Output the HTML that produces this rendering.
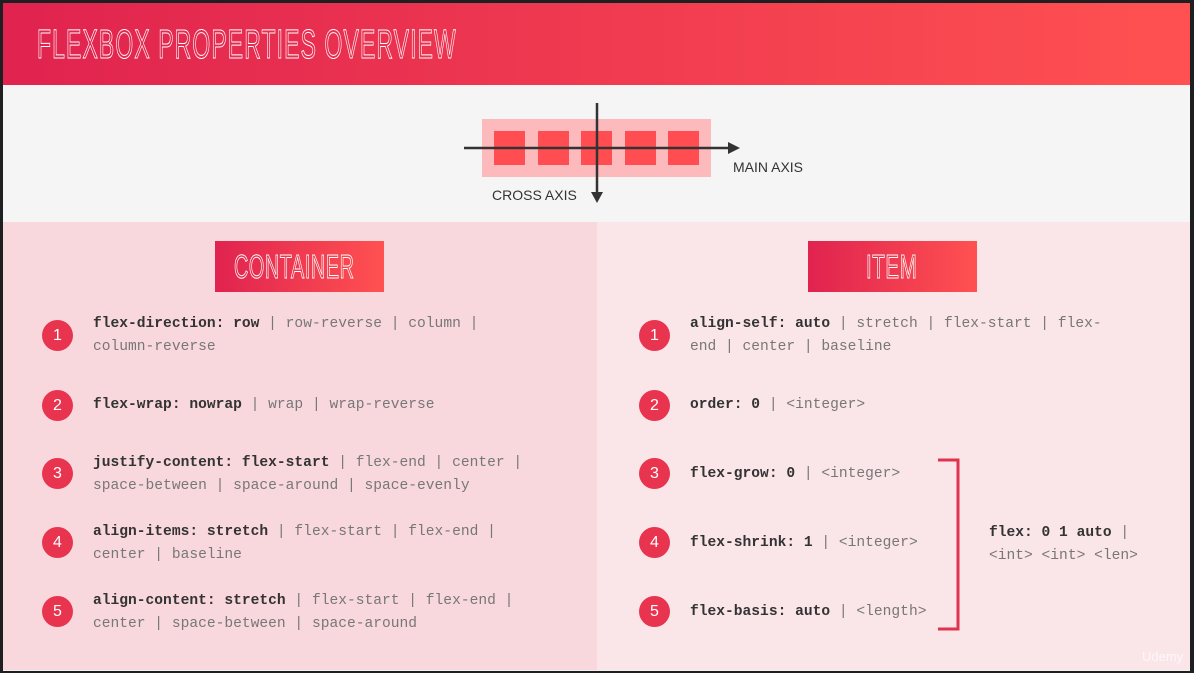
<!DOCTYPE html>
<html><head><meta charset="utf-8"><style>
*{margin:0;padding:0;box-sizing:border-box}
body{width:1194px;height:673px;background:#1e1f21;position:relative;overflow:hidden;font-family:"Liberation Mono",monospace}
.a{position:absolute}
.hdr{left:3px;top:3px;width:1187px;height:82px;background:linear-gradient(90deg,#e0234f,#ff5151)}
.title{left:37px;top:22px;font-family:"Liberation Sans Narrow","Liberation Sans",sans-serif;font-size:41px;color:transparent;-webkit-text-stroke:1px #fff;letter-spacing:2px;transform:scaleX(0.56);transform-origin:left top;white-space:nowrap;line-height:44px}
.gray{left:3px;top:85px;width:1187px;height:137px;background:#f5f5f5}
.lp{left:3px;top:222px;width:594px;height:448px;background:#f8d8dc}
.rp{left:597px;top:222px;width:593px;height:448px;background:#fae5e9}
.wl{left:3px;top:670px;width:1187px;height:1px;background:#f0f0f0}
.btn{top:241px;width:169px;height:51px;background:linear-gradient(90deg,#e0234f,#ff5151)}
.btn span{position:absolute;top:0;white-space:nowrap;font-family:"Liberation Sans Narrow","Liberation Sans",sans-serif;font-size:33px;line-height:51px;color:transparent;-webkit-text-stroke:1px #fff;transform-origin:left top;letter-spacing:1px}
.c{width:31px;height:31px;border-radius:50%;background:#e8344e;color:#fff;font-family:"Liberation Sans",sans-serif;font-size:16px;text-align:center;line-height:31px}
.t{font-size:14.6px;line-height:23px;color:#777;white-space:nowrap}
.t b{color:#333;font-weight:bold}
.ax{font-family:"Liberation Sans",sans-serif;font-size:14px;color:#333;font-weight:500}
</style></head><body>
<div class="a hdr"></div>
<div class="a title">FLEXBOX PROPERTIES OVERVIEW</div>
<div class="a gray"></div>
<div class="a" style="left:482px;top:119px;width:229px;height:58px;background:#fdbabd"></div>
<div class="a" style="left:494px;top:131px;width:31px;height:34px;background:#ff4d52"></div>
<div class="a" style="left:538px;top:131px;width:31px;height:34px;background:#ff4d52"></div>
<div class="a" style="left:581px;top:131px;width:31px;height:34px;background:#ff4d52"></div>
<div class="a" style="left:625px;top:131px;width:31px;height:34px;background:#ff4d52"></div>
<div class="a" style="left:668px;top:131px;width:31px;height:34px;background:#ff4d52"></div>
<svg class="a" style="left:0;top:0" width="1194" height="230"><g fill="#333" stroke="#333"><line x1="464" y1="148" x2="730" y2="148" stroke-width="2.5"/><path d="M728 142 L740 148 L728 154Z" stroke="none"/><line x1="597" y1="103" x2="597" y2="194" stroke-width="2.5"/><path d="M591 192 L597 203 L603 192Z" stroke="none"/></g></svg>
<div class="a ax" style="left:733px;top:159px">MAIN AXIS</div>
<div class="a ax" style="left:492px;top:187px">CROSS AXIS</div>
<div class="a lp"></div><div class="a rp"></div><div class="a wl"></div>
<div class="a btn" style="left:215px"><span style="left:19px;transform:scaleX(0.6)">CONTAINER</span></div>
<div class="a btn" style="left:808px"><span style="left:58px;transform:scaleX(0.62)">ITEM</span></div>

<div class="a c" style="left:42px;top:320px">1</div>
<div class="a t" style="left:93px;top:313px"><b>flex-direction: row</b> | row-reverse | column |<br>column-reverse</div>
<div class="a c" style="left:42px;top:390px">2</div>
<div class="a t" style="left:93px;top:394px"><b>flex-wrap: nowrap</b> | wrap | wrap-reverse</div>
<div class="a c" style="left:42px;top:458px">3</div>
<div class="a t" style="left:93px;top:452px"><b>justify-content: flex-start</b> | flex-end | center |<br>space-between | space-around | space-evenly</div>
<div class="a c" style="left:42px;top:527px">4</div>
<div class="a t" style="left:93px;top:521px"><b>align-items: stretch</b> | flex-start | flex-end |<br>center | baseline</div>
<div class="a c" style="left:42px;top:596px">5</div>
<div class="a t" style="left:93px;top:590px"><b>align-content: stretch</b> | flex-start | flex-end |<br>center | space-between | space-around</div>

<div class="a c" style="left:639px;top:320px">1</div>
<div class="a t" style="left:690px;top:313px"><b>align-self: auto</b> | stretch | flex-start | flex-<br>end | center | baseline</div>
<div class="a c" style="left:639px;top:390px">2</div>
<div class="a t" style="left:690px;top:394px"><b>order: 0</b> | &lt;integer&gt;</div>
<div class="a c" style="left:639px;top:458px">3</div>
<div class="a t" style="left:690px;top:463px"><b>flex-grow: 0</b> | &lt;integer&gt;</div>
<div class="a c" style="left:639px;top:527px">4</div>
<div class="a t" style="left:690px;top:532px"><b>flex-shrink: 1</b> | &lt;integer&gt;</div>
<div class="a c" style="left:639px;top:596px">5</div>
<div class="a t" style="left:690px;top:601px"><b>flex-basis: auto</b> | &lt;length&gt;</div>
<svg class="a" style="left:930px;top:455px" width="40" height="180"><path d="M8 5 H28 V174 H8" fill="none" stroke="#e0344e" stroke-width="3"/></svg>
<div class="a t" style="left:989px;top:522px"><b>flex: 0 1 auto</b> |<br>&lt;int&gt; &lt;int&gt; &lt;len&gt;</div>
<div class="a" style="left:1142px;top:649px;font-family:'Liberation Sans',sans-serif;font-size:13px;color:rgba(255,255,255,0.7)">Udemy</div>
</body></html>
